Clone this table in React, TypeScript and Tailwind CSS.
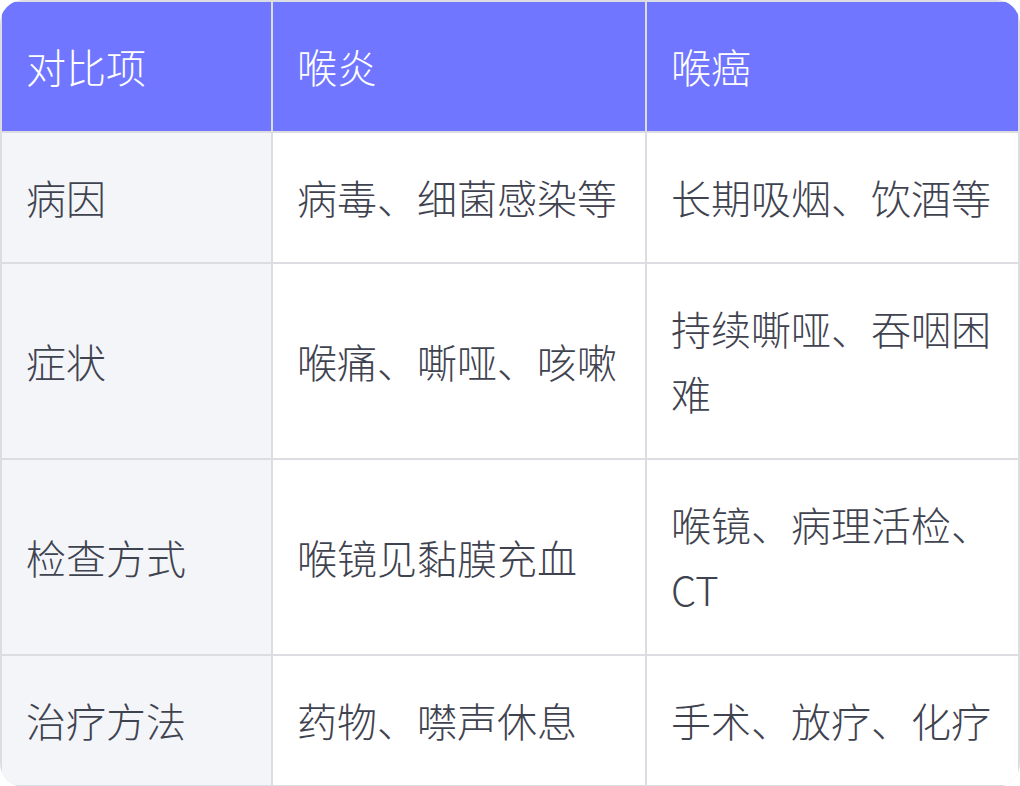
const header = ['对比项', '喉炎', '喉癌'];

const rows: string[][] = [
  ['病因', '病毒、细菌感染等', '长期吸烟、饮酒等'],
  ['症状', '喉痛、嘶哑、咳嗽', '持续嘶哑、吞咽困难'],
  ['检查方式', '喉镜见黏膜充血', '喉镜、病理活检、CT'],
  ['治疗方法', '药物、噤声休息', '手术、放疗、化疗'],
];

const font = { fontFamily: '"Noto Sans CJK SC", "Noto Sans", sans-serif' };

export default function App() {
  return (
    <div className="w-[1020px] h-[786px] bg-white" style={font}>
      <div className="grid grid-cols-[269px_372px_1fr] gap-[2px] p-[2px] bg-[#dcdde2] rounded-3xl overflow-hidden text-[40px] leading-[65px] font-light">
        {header.map((h) => (
          <div key={h} className="bg-[#7076ff] text-white px-6 py-8 flex items-center">
            {h}
          </div>
        ))}
        {rows.map((r) =>
          r.map((c, i) => (
            <div
              key={r[0] + i}
              className={
                i === 0
                  ? 'bg-[#f4f5f9] text-[#3f4350] px-6 py-8 flex items-center'
                  : 'bg-white text-[#3f4350] px-6 py-8 flex items-center'
              }
            >
              <span>{c}</span>
            </div>
          ))
        )}
      </div>
    </div>
  );
}
